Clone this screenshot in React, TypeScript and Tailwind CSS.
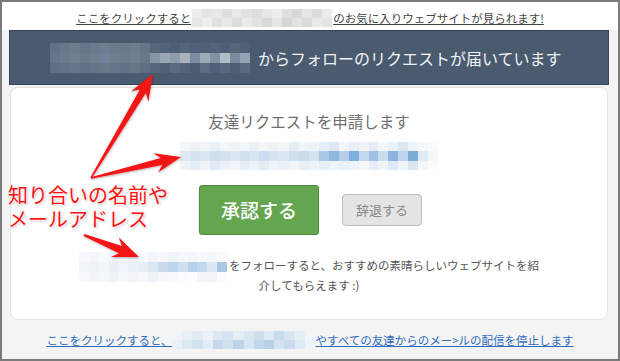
import React from "react";

type MosaicProps = { rows: string[][]; w: number; h: number; className?: string };

function Mosaic({ rows, w, h, className }: MosaicProps) {
  const cols = rows[0].length;
  return (
    <svg
      width={w}
      height={h}
      viewBox={`0 0 ${cols * 10} ${rows.length * 10}`}
      preserveAspectRatio="none"
      className={className}
      shapeRendering="crispEdges"
    >
      {rows.map((r, y) =>
        r.map((c, x) => <rect key={`${x}-${y}`} x={x * 10} y={y * 10} width={10.5} height={10.5} fill={c} />)
      )}
    </svg>
  );
}

const topBlur = [
  ["#ececec", "#e4e4e4", "#e8e8e8", "#dedede", "#e9e9e9", "#e2e2e2", "#dddddd", "#e7e7e7", "#eeeeee", "#e0e0e0", "#d8d8d8", "#e6e6e6", "#dcdcdc", "#ebebeb"],
  ["#e6e6e6", "#eeeeee", "#e1e1e1", "#e8e8e8", "#dcdcdc", "#ebebeb", "#e3e3e3", "#d9d9d9", "#e5e5e5", "#d6d6d6", "#e2e2e2", "#dadada", "#e9e9e9", "#e4e4e4"],
];

const bannerBlur = [
  ["#627286", "#687889", "#6c7b8e", "#66768a", "#6a798c", "#6e7d90", "#6b7a8d", "#697a8d", "#6d7c8f", "#65758a", "#566679", "#52627a", "#4e5e74", "#55657a", "#50607a", "#4f5f75", "#53637a", "#4e5e74", "#55657a", "#4f5f76"],
  ["#65758a", "#6b7b8e", "#70808f", "#6a7a8d", "#6e7d90", "#72819a", "#6f7e91", "#6c7c8e", "#71808f", "#68788b", "#8695a6", "#9aa7b5", "#8e9cad", "#a8b3be", "#7d8ca0", "#9eaab7", "#8292a4", "#b2bcc6", "#7c8b9e", "#96a3b2"],
  ["#5f6f84", "#637387", "#677689", "#617185", "#657488", "#68778a", "#667589", "#637386", "#677689", "#5e6e83", "#56667b", "#4f5f75", "#5a6a7f", "#53637a", "#4c5c72", "#5d6d81", "#50607a", "#58687d", "#4e5e74", "#5a6a7e"],
];

const emailBlur = [
  ["#f3f6f9", "#eef3f7", "#f1f5f9", "#e9f0f6", "#f3f6f9", "#eef3f8", "#f5f8fa", "#eaf1f7", "#f2f6f9", "#eef3f8", "#f4f7fa", "#e6eef5", "#f1f5f9", "#eef3f8", "#e5eef6", "#dde8f1", "#f2f6f9", "#e8eff6", "#f0f4f8", "#e4edf5", "#f3f6f9", "#e9f0f6", "#dbe7f1", "#eef3f8", "#f6f8fb", "#fafbfd"],
  ["#dfe9f2", "#d6e4ef", "#d9e6f0", "#cfdfed", "#d4e2ee", "#dce7f1", "#d1e0ed", "#d8e5f0", "#cddded", "#d6e4ef", "#dbe6f1", "#d0dfed", "#c9dbeb", "#d5e3ef", "#a8c8e6", "#8fb8e0", "#b6d0ea", "#7fb0dc", "#c2d8ee", "#9ec2e5", "#cadcee", "#8cb5de", "#bcd4ec", "#7aaed9", "#e0ebf5", "#f5f8fb"],
  ["#eef3f8", "#e6eef5", "#f0f4f8", "#e2ebf3", "#ecf2f7", "#f2f6f9", "#e7eff6", "#eef3f8", "#e4ecf4", "#f1f5f9", "#eaf1f7", "#f3f6f9", "#e8eff6", "#eef3f8", "#e6eef6", "#f0f5f9", "#e9f0f7", "#eef3f8", "#f4f7fa", "#e4edf5", "#f0f4f8", "#dfe9f3", "#eef3f8", "#dae6f1", "#f4f7fa", "#fbfcfd"],
];

const textBlur = [
  ["#f6f8fb", "#f3f6f9", "#f7f9fb", "#f1f5f9", "#f5f7fa", "#eef3f8", "#f7f9fb", "#f3f6f9", "#f6f8fb", "#eff4f8", "#f5f7fa", "#f2f5f9", "#f6f8fb", "#f4f7fa", "#f8fafc"],
  ["#f1f5f9", "#eef3f8", "#f3f6f9", "#e8eff6", "#f0f4f8", "#eaf1f7", "#e6eef6", "#dbe7f2", "#c9dcee", "#bed5ec", "#cfe0f0", "#b8d1ea", "#c3d8ed", "#dbe8f3", "#a9c8e6"],
  ["#f7f9fb", "#f2f6f9", "#f5f7fa", "#eef3f8", "#f6f8fb", "#f1f5f9", "#f5f7fa", "#eef3f8", "#f6f8fb", "#f9fafc", "#fbfcfd", "#fcfdfe", "#f3f6f9", "#f0f4f8", "#fafbfd"],
];

const linkBlur = [
  ["#f1f5f9", "#e9f0f7", "#e2ebf4", "#ecf2f8", "#dfe9f3", "#d6e3f0", "#e5edf5", "#dbe7f2", "#cfdfee", "#e0eaf4", "#c8daec", "#d9e6f2", "#e6eef6", "#f0f5fa"],
  ["#eaf1f7", "#dce8f3", "#d2e2f0", "#e4edf6", "#c6d9ec", "#d0e0ef", "#bcd3ea", "#d8e5f2", "#c2d7eb", "#b8d0e9", "#d5e3f1", "#c9dbed", "#e0eaf4", "#eef4f9"],
];

function arrowPoints(tx: number, ty: number, hx: number, hy: number, headLen: number, headW: number, neckW: number, tailW: number) {
  const dx = hx - tx;
  const dy = hy - ty;
  const L = Math.hypot(dx, dy);
  const ux = dx / L;
  const uy = dy / L;
  const nx = -uy;
  const ny = ux;
  const bx = hx - ux * headLen;
  const by = hy - uy * headLen;
  const nbx = hx - ux * (headLen - 6);
  const nby = hy - uy * (headLen - 6);
  const pts: [number, number][] = [
    [tx + (nx * tailW) / 2, ty + (ny * tailW) / 2],
    [nbx + (nx * neckW) / 2, nby + (ny * neckW) / 2],
    [bx + (nx * headW) / 2, by + (ny * headW) / 2],
    [hx, hy],
    [bx - (nx * headW) / 2, by - (ny * headW) / 2],
    [nbx - (nx * neckW) / 2, nby - (ny * neckW) / 2],
    [tx - (nx * tailW) / 2, ty - (ny * tailW) / 2],
  ];
  return pts.map((p) => `${p[0].toFixed(1)},${p[1].toFixed(1)}`).join(" ");
}

export default function App() {
  const arrows = [
    arrowPoints(91, 178, 153, 74, 26, 20, 7, 1.5),
    arrowPoints(91, 178, 181, 157, 26, 20, 7, 1.5),
    arrowPoints(84, 235, 139, 257, 26, 21, 8, 2),
  ];
  return (
    <div className="relative w-[620px] h-[361px] overflow-hidden font-['Noto_Sans_CJK_JP',sans-serif]">
      <div className="flex flex-col w-full h-full border-2 border-[#7a7a7a] bg-[#f4f4f4]">
        <div className="h-[28px] bg-white flex justify-center pt-[3px]">
          <div className="flex items-center text-[11.5px] leading-[16px] text-[#444] underline">
            <span>ここをクリックすると</span>
            <Mosaic rows={topBlur} w={140} h={18} className="mx-[1px]" />
            <span>のお気に入りウェブサイトが見られます!</span>
          </div>
        </div>
        <div className="ml-[7px] mr-[9px] h-[55px] bg-[#4a5a6f] border border-[#34445a] flex items-center">
          <Mosaic rows={bannerBlur} w={200} h={30} className="ml-[40px]" />
          <span className="ml-[8px] text-[16px] leading-[24px] text-[#f0f2f5]">からフォローのリクエストが届いています</span>
        </div>
        <div className="mt-[2px] ml-[8px] mr-[10px] h-[233px] bg-white rounded-lg border border-[#e2e2e2] flex flex-col items-center">
          <div className="mt-[21px] text-[15.5px] leading-[24px] text-[#6e6e6e]">友達リクエストを申請します</div>
          <Mosaic rows={emailBlur} w={258} h={28} className="mt-[9px]" />
          <div className="mt-[15px] flex items-center gap-[23px] ml-[3px]">
            <div className="w-[120px] h-[50px] rounded-[3px] bg-[#64a64f] border border-[#4c8a3c] flex items-center justify-center text-white text-[19px] font-medium">
              承認する
            </div>
            <div className="w-[80px] h-[32px] rounded-[4px] bg-[#e4e4e4] border border-[#bdbdbd] flex items-center justify-center text-[#8a8a8a] text-[13px]">
              辞退する
            </div>
          </div>
          <div className="mt-[20px] text-center text-[11.5px] leading-[20px] text-[#555]">
            <span className="relative inline-block w-[148px] h-[20px] align-top mr-[2px]">
              <Mosaic rows={textBlur} w={148} h={30} className="absolute left-0 top-[-3px]" />
            </span>
            をフォローすると、おすすめの素晴らしいウェブサイトを紹
            <br />
            介してもらえます :)
          </div>
        </div>
        <div className="flex-1 flex items-center justify-center">
          <div className="flex items-center text-[11.5px] leading-[16px] text-[#2f6cc0] underline">
            <span>ここをクリックすると、</span>
            <Mosaic rows={linkBlur} w={143} h={18} />
            <span>やすべての友達からのメー&gt;ルの配信を停止します</span>
          </div>
        </div>
      </div>

      <svg className="absolute left-0 top-0 pointer-events-none" width={620} height={361} viewBox="0 0 620 361">
        <defs>
          <filter id="ash" x="-20%" y="-20%" width="140%" height="140%">
            <feDropShadow dx="0.5" dy="1" stdDeviation="0.8" floodColor="#000" floodOpacity="0.3" />
          </filter>
        </defs>
        {arrows.map((p, i) => (
          <polygon key={i} points={p} fill="#f41414" filter="url(#ash)" />
        ))}
      </svg>

      <div className="absolute left-[8px] top-[183px] flex flex-col text-[20px] leading-[24px] text-[#ff1010] font-normal [text-shadow:0_0_2px_#fff,0_0_2px_#fff,0_0_3px_#fff,1px_1px_3px_rgba(0,0,0,0.35)]">
        <span>知り合いの名前や</span>
        <span>メールアドレス</span>
      </div>
    </div>
  );
}
